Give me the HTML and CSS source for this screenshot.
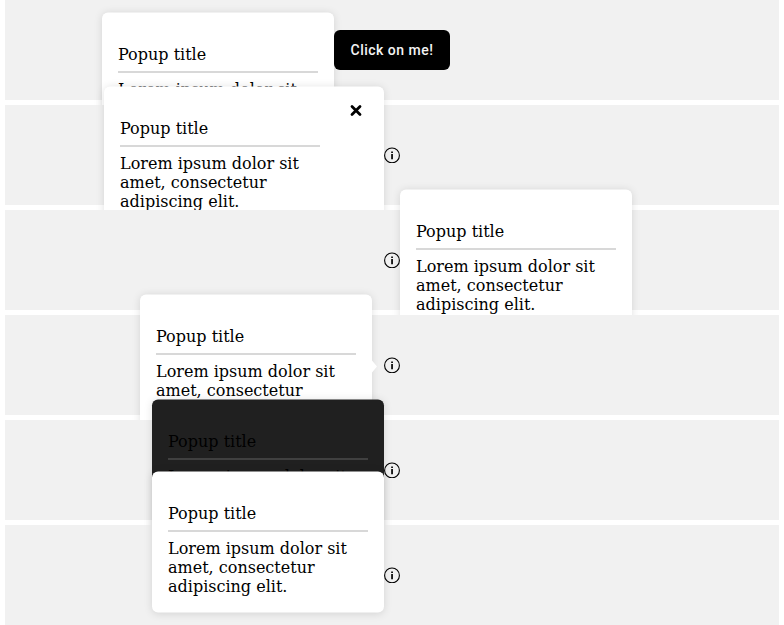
FILE: index.html
```
<!DOCTYPE html>
<html lang="en">
<head>
<meta charset="utf-8">
<title>Popups</title>
<link rel="stylesheet" href="styles.css">
</head>
<body>
<svg class="defs" width="0" height="0" aria-hidden="true">
  <symbol id="info" viewBox="0 0 16 16">
    <circle cx="8" cy="8.4" r="7.4" fill="none" stroke="#000" stroke-width="1.1"/>
    <path d="M7.2 4.5h1.7v1.6H7.2zM7.2 7h1.7v5.2H7.2z"/>
  </symbol>
</svg>
<main class="stack">
  <section class="row">
    <div class="anchor">
      <button class="button">Click on me!</button>
      <div class="popup popup--left popup--high"><h2><span>Popup title</span></h2><p>Lorem ipsum dolor sit amet, consectetur adipiscing elit.</p></div>
    </div>
  </section>
  <section class="row">
    <div class="anchor">
      <svg class="icon"><use href="#info"/></svg>
      <div class="popup popup--left popup--closable"><h2><span>Popup title</span></h2><p>Lorem ipsum dolor sit amet, consectetur adipiscing elit.</p>
        <svg class="close" viewBox="0 0 12 12"><path d="M2 2l8 8M10 2l-8 8"/></svg>
      </div>
    </div>
  </section>
  <section class="row">
    <div class="anchor">
      <svg class="icon"><use href="#info"/></svg>
      <div class="popup popup--right"><h2><span>Popup title</span></h2><p>Lorem ipsum dolor sit amet, consectetur adipiscing elit.</p></div>
    </div>
  </section>
  <section class="row">
    <div class="anchor">
      <svg class="icon"><use href="#info"/></svg>
      <div class="popup popup--left popup--arrow"><h2><span>Popup title</span></h2><p>Lorem ipsum dolor sit amet, consectetur adipiscing elit.</p></div>
    </div>
  </section>
  <section class="row">
    <div class="anchor">
      <svg class="icon"><use href="#info"/></svg>
      <div class="popup popup--left popup--dark"><h2><span>Popup title</span></h2><p>Lorem ipsum dolor sit amet, consectetur adipiscing elit.</p></div>
    </div>
  </section>
  <section class="row">
    <div class="anchor">
      <svg class="icon"><use href="#info"/></svg>
      <div class="popup popup--left popup--centered"><h2><span>Popup title</span></h2><p>Lorem ipsum dolor sit amet, consectetur adipiscing elit.</p></div>
    </div>
  </section>
</main>
</body>
</html>
```
FILE: styles.css
```
* { box-sizing: border-box; }
body {
  margin: 0;
  height: 625px;
  overflow: hidden;
  background: #fff;
  font: 16px/19px "DejaVu Serif", serif;
  color: #000;
}
.defs { position: absolute; }
.stack {
  display: flex;
  flex-direction: column;
  gap: 5px;
  padding: 0 5px;
}
.row {
  display: flex;
  align-items: center;
  justify-content: center;
  position: relative;
  height: 100px;
  background: #f1f1f1;
}
.anchor { position: relative; display: flex; }
.icon { width: 16px; height: 16px; }
.button {
  width: 116px;
  height: 40px;
  padding: 0;
  border: 0;
  border-radius: 6px;
  background: #000;
  color: #f4f4f4;
  font: 500 14px/20px Roboto, sans-serif;
  letter-spacing: 0.5px;
}
.popup {
  position: absolute;
  top: -62px;
  width: 232px;
  height: 141px;
  padding: 16px;
  border-radius: 6px;
  background: #fff;
  box-shadow: 0 1px 8px rgba(0, 0, 0, 0.12);
  transform: translateY(-0.5px);
}
.popup--left { right: 100%; }
.popup--right { left: 100%; }
.popup--high { top: -17px; }
.popup--closable { top: -60px; width: 280px; padding-right: 64px; }
.popup--arrow { right: calc(100% + 12px); }
.popup--arrow::after {
  content: "";
  position: absolute;
  left: 100%;
  top: 65.5px;
  border: 6px solid transparent;
  border-left: 5.5px solid #fff;
  border-right: 0;
}
.popup--dark { background: #202020; }
.popup--centered { top: -95px; }
.popup h2 {
  margin: 16px 0 7px;
  padding-bottom: 8px;
  border-bottom: 2px solid #d8d8d8;
  font: inherit;
  transform: translateY(-0.5px);
}
.popup h2 span {
  display: block;
  transform: translateY(0.5px);
}
.popup--dark h2 { border-color: #404040; }
.popup p { margin: 0; transform: translateY(-0.5px); }
.close {
  position: absolute;
  top: 18px;
  right: 22px;
  width: 12px;
  height: 12px;
  fill: none;
  stroke: #000;
  stroke-width: 2.8;
  stroke-linecap: round;
}
```
